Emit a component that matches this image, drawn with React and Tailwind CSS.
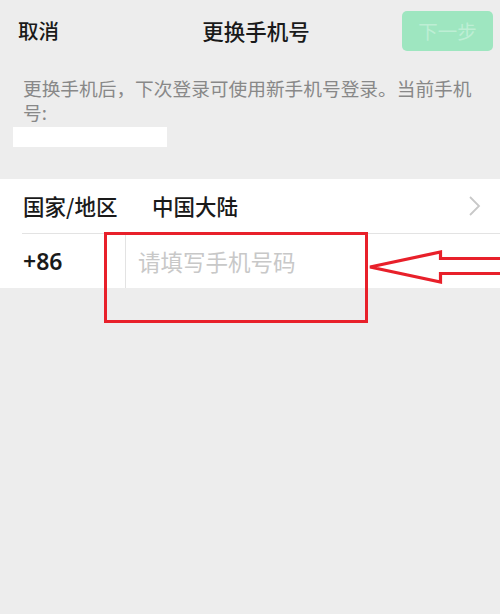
export default function App() {
  const font = { fontFamily: '"Noto Sans CJK SC", "Noto Sans", sans-serif' };
  return (
    <div className="relative w-[500px] h-[614px] bg-[#ededed] overflow-hidden" style={font}>
      {/* Header */}
      <div className="flex items-center justify-between h-[61px] pl-[18px] pr-[7px]">
        <span className="text-[20.5px] font-medium text-[#1a1a1a] leading-none w-[90px]">取消</span>
        <span className="text-[21.5px] font-medium text-[#1a1a1a] leading-none ml-[2px]">更换手机号</span>
        <div className="w-[91px] h-[40px] rounded-[5px] bg-[#9ee6c0] flex items-center justify-center">
          <span className="text-[19.5px] text-[#bdeed4] leading-none">下一步</span>
        </div>
      </div>

      {/* Description */}
      <div className="pl-[23px] pr-[23px] pt-[15px]">
        <p className="text-[18.7px] leading-[24px] text-[#888888]">
          更换手机后，下次登录可使用新手机号登录。当前手机号:
        </p>
      </div>
      <div className="ml-[13px] mt-[3px] w-[154px] h-[20px] bg-white" />

      {/* Form */}
      <div className="mt-[32px] bg-white">
        <div className="flex items-center h-[54px] pl-[23px] pr-[16px]">
          <span className="w-[129px] text-[21.5px] font-medium text-[#1a1a1a] leading-none">国家/地区</span>
          <span className="flex-1 text-[21.5px] font-medium text-[#1a1a1a] leading-none">中国大陆</span>
          <svg width="14" height="22" viewBox="0 0 14 22" className="mr-[2px]">
            <path d="M2 2 L11 11 L2 20" fill="none" stroke="#c8c8c8" strokeWidth="1.8" />
          </svg>
        </div>
        <div className="ml-[22px] h-px bg-[#e3e3e3]" />
        <div className="flex items-stretch h-[54px]">
          <div className="w-[125px] pl-[23px] flex items-center">
            <span className="text-[23px] font-semibold text-[#1a1a1a] leading-none" style={{ fontFamily: '"Noto Sans", sans-serif' }}>+86</span>
          </div>
          <div className="w-px bg-[#e3e3e3]" />
          <div className="flex items-center pl-[12px]">
            <span className="text-[22.5px] text-[#c8c8c8] leading-none">请填写手机号码</span>
          </div>
        </div>
      </div>

      {/* Annotation: red box */}
      <div className="absolute left-[104px] top-[232px] w-[264px] h-[91px] border-[3px] border-[#e8202a]" />

      {/* Annotation: arrow */}
      <svg className="absolute left-0 top-0" width="500" height="614" viewBox="0 0 500 614">
        <polyline
          points="503,258.5 440.5,258.5 440.5,252 370,267 440.5,282 440.5,273.5 503,273.5"
          fill="none"
          stroke="#e8202a"
          strokeWidth="3.2"
          strokeLinejoin="miter"
        />
      </svg>
    </div>
  );
}
